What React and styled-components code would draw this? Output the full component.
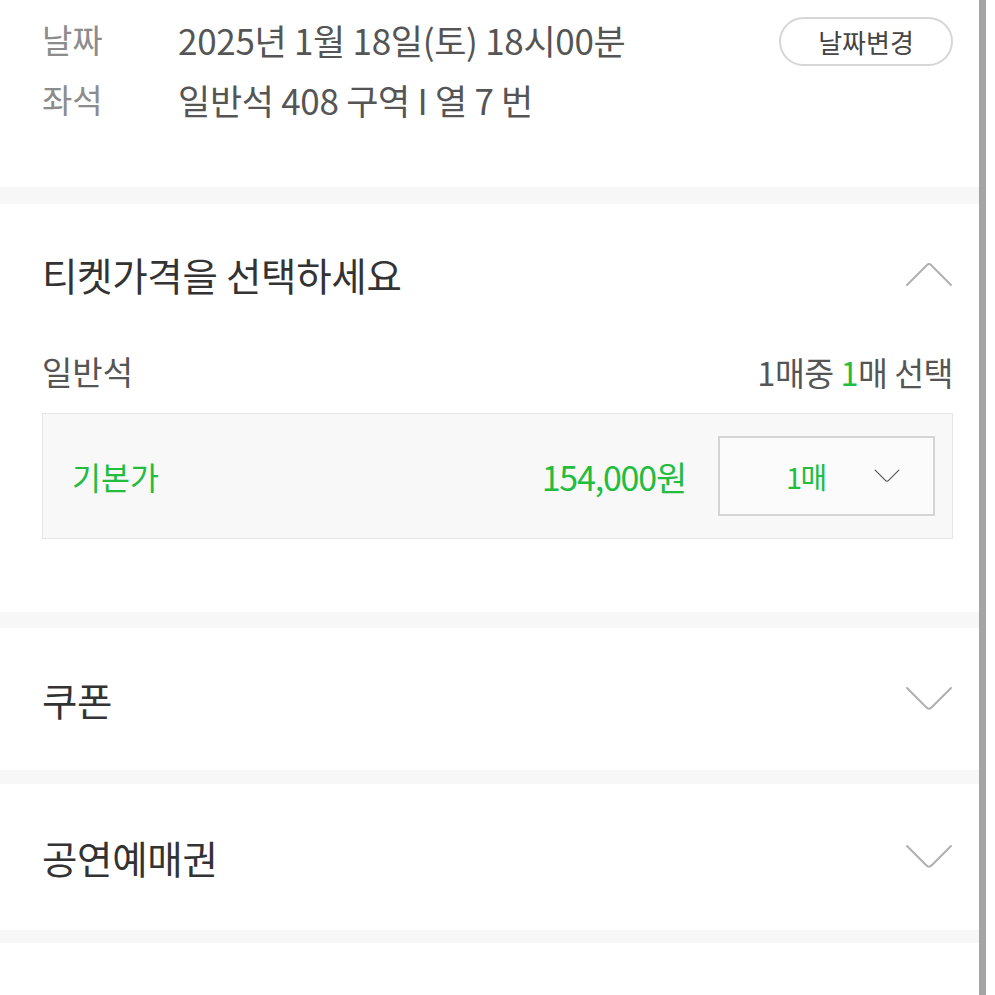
import React from 'react';
import styled, { createGlobalStyle } from 'styled-components';

const GlobalStyle = createGlobalStyle`
  html, body {
    margin: 0;
    padding: 0;
    background: #ffffff;
    font-family: "Noto Sans CJK KR", "Noto Sans", sans-serif;
  }
`;

const GREEN = '#22bd3f';

// chevron drawn thin, like the original
const Chevron = ({ up, w = 48, h = 26, color = '#b0b0b0', stroke = 2 }) => (
  <svg width={w} height={h} viewBox="0 0 48 26" fill="none">
    <path
      d={up ? 'M2 24 L22 4 Q24 2 26 4 L46 24' : 'M2 2 L21 21 Q24 24.5 27 21 L46 2'}
      stroke={color}
      strokeWidth={stroke}
      strokeLinecap="round"
      strokeLinejoin="round"
    />
  </svg>
);

export default function App() {
  return (
    <>
      <GlobalStyle />
      <Screen>
        <Content>
          <InfoSection>
            <InfoRow>
              <InfoLabel>날짜</InfoLabel>
              <InfoValue>2025년 1월 18일(토) 18시00분</InfoValue>
              <PillButton>날짜변경</PillButton>
            </InfoRow>
            <InfoRow>
              <InfoLabel>좌석</InfoLabel>
              <InfoValue>일반석 408 구역 I 열 7 번</InfoValue>
            </InfoRow>
          </InfoSection>

          <Band h={17} />

          <PriceSection>
            <SectionHeader h={100}>
              <SectionTitle>티켓가격을 선택하세요</SectionTitle>
              <Chevron up />
            </SectionHeader>
            <GradeRow>
              <GradeName>일반석</GradeName>
              <GradeCount>
                1매중 <Green>1</Green>매 선택
              </GradeCount>
            </GradeRow>
            <PriceBox>
              <PriceName>기본가</PriceName>
              <PriceAmount>154,000원</PriceAmount>
              <QtySelect>
                <QtyText>1매</QtyText>
                <Chevron w={26} h={14} color="#555" stroke={2.2} />
              </QtySelect>
            </PriceBox>
          </PriceSection>

          <Band h={16} />

          <SectionHeader h={142}>
            <SectionTitle>쿠폰</SectionTitle>
            <Chevron />
          </SectionHeader>

          <Band h={14} />

          <SectionHeader h={146}>
            <SectionTitle>공연예매권</SectionTitle>
            <Chevron />
          </SectionHeader>

          <Band h={13} />
        </Content>
        <ScrollTrack>
          <ScrollThumb />
        </ScrollTrack>
      </Screen>
    </>
  );
}

const Screen = styled.div`
  display: flex;
  width: 995px;
  height: 995px;
  overflow: hidden;
  background: #fff;
`;

const Content = styled.div`
  width: 979px;
  display: flex;
  flex-direction: column;
`;

const ScrollTrack = styled.div`
  width: 16px;
  display: flex;
`;

const ScrollThumb = styled.div`
  width: 7px;
  background: #a4a4a4;
`;

const InfoSection = styled.div`
  padding: 9px 26px 58px 42px;
`;

const InfoRow = styled.div`
  display: flex;
  align-items: center;
  height: 60px;
`;

const InfoLabel = styled.span`
  width: 136px;
  font-size: 33px;
  color: #8c8c8c;
`;

const InfoValue = styled.span`
  flex: 1;
  font-size: 35px;
  color: #555;
  letter-spacing: -0.3px;
`;

const PillButton = styled.button`
  width: 174px;
  height: 49px;
  border: 2px solid #d6d6d6;
  border-radius: 25px;
  background: #fff;
  font-family: inherit;
  font-size: 26px;
  color: #444;
  padding: 0;
  margin-top: 5px;
`;

const Band = styled.div`
  height: ${p => p.h}px;
  background: #f7f7f7;
`;

const PriceSection = styled.div`
  padding: 20px 26px 73px 42px;
`;

const SectionHeader = styled.div`
  display: flex;
  align-items: center;
  justify-content: space-between;
  height: ${p => p.h}px;
  padding: 0 26px 0 42px;
  ${PriceSection} & {
    padding: 0;
  }
`;

const SectionTitle = styled.h2`
  margin: 0;
  font-size: 38.5px;
  font-weight: 400;
  color: #333;
  letter-spacing: -0.3px;
`;

const GradeRow = styled.div`
  display: flex;
  align-items: center;
  justify-content: space-between;
  height: 66px;
  margin-top: 14px;
`;

const GradeName = styled.span`
  font-size: 33px;
  color: #555;
`;

const GradeCount = styled.span`
  font-size: 32.5px;
  color: #555;
  letter-spacing: -0.5px;
`;

const Green = styled.span`
  color: ${GREEN};
`;

const PriceBox = styled.div`
  display: flex;
  align-items: center;
  height: 124px;
  margin-top: 9px;
  padding: 0 17px 0 29px;
  background: #f8f8f8;
  border: 1px solid #e6e6e6;
`;

const PriceName = styled.span`
  flex: 1;
  font-size: 31.5px;
  color: ${GREEN};
`;

const PriceAmount = styled.span`
  font-size: 34px;
  color: ${GREEN};
  letter-spacing: -1.2px;
  margin-right: 32px;
`;

const QtySelect = styled.div`
  display: flex;
  align-items: center;
  box-sizing: border-box;
  width: 217px;
  height: 80px;
  padding: 0 33px 0 66px;
  background: #fbfbfb;
  border: 2px solid #d4d4d4;
`;

const QtyText = styled.span`
  flex: 1;
  font-size: 29px;
  color: ${GREEN};
  letter-spacing: -1.5px;
`;
